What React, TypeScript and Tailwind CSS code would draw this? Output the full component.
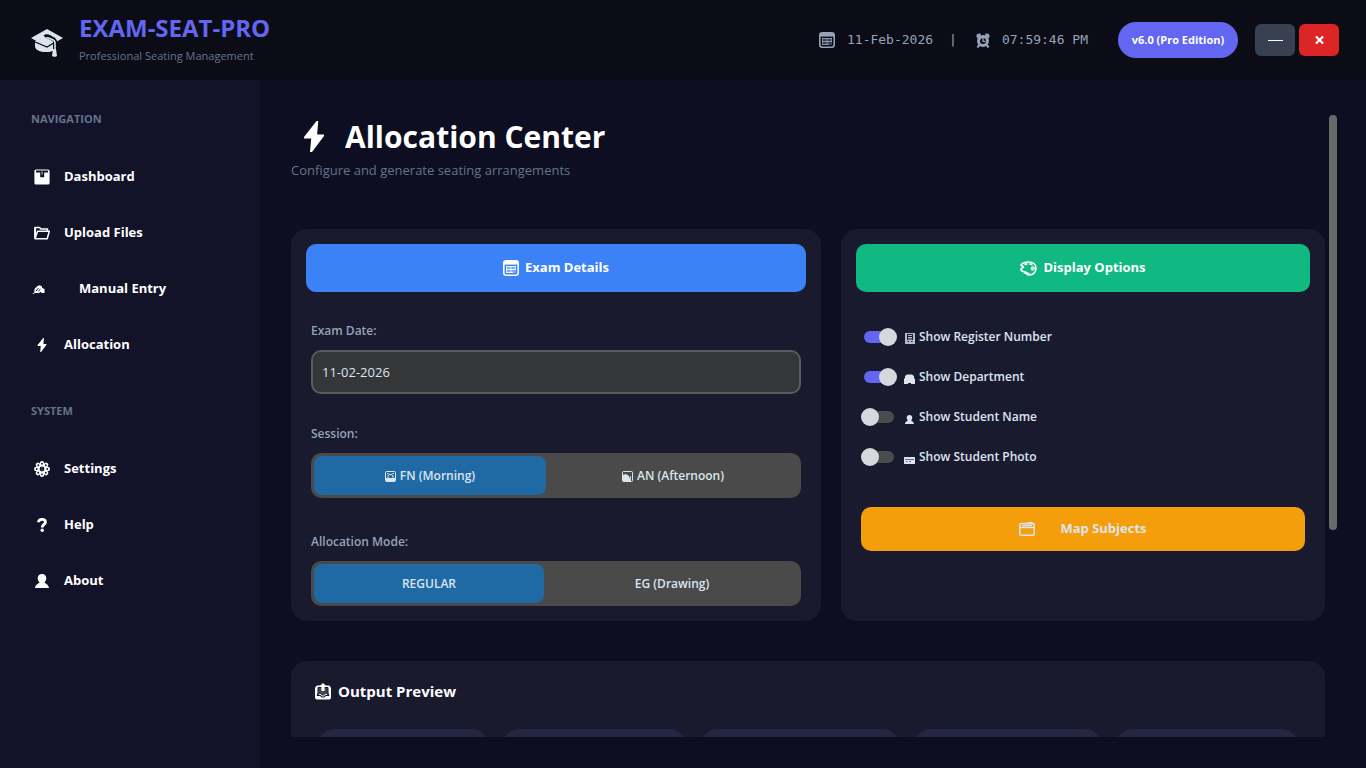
import { useState } from 'react';
import type { ReactNode } from 'react';

type IconProps = { className?: string };

function CapIcon() {
  return (
    <svg width="32" height="28" viewBox="0 0 32 28" fill="none">
      <path d="M4 12v5c0 4 5 6 11 6s11-2 11-5v-6z" fill="#dce4ee" />
      <path d="M16 0L32 9L16 18L0 9z" fill="#dce4ee" />
      <path d="M2 12L16 18L26 12" stroke="#0c0c17" strokeWidth="1.2" />
      <path d="M14 8c2-2 4 0 6 1s4 1 4 4v10" stroke="#0c0c17" strokeWidth="4" />
      <path d="M15 9c1-1 3 0 5 1s4 1 4 4v8" stroke="#dce4ee" strokeWidth="1.6" />
      <path d="M22 20h3l1 7c-1 1-4 1-5 0z" fill="#dce4ee" />
    </svg>
  );
}

function CalendarIcon({ className }: IconProps) {
  return (
    <svg width="16" height="16" viewBox="0 0 16 16" fill="none" className={className}>
      <rect x="0.8" y="0.8" width="14.4" height="14.4" rx="2.5" stroke="currentColor" strokeWidth="1.6" />
      <path d="M1 1h14v3.6H1z" fill="currentColor" />
      <path d="M3 6h10v7H3z" fill="currentColor" fillOpacity="0.35" />
      <path d="M3 6.5h10M3 9.5h10M3 12.5h7" stroke="currentColor" strokeOpacity="0.85" />
      <path d="M3.500 6v7M8 6v7M12.500 6v4" stroke="currentColor" strokeOpacity="0.7" />
    </svg>
  );
}

function ClockIcon() {
  return (
    <svg width="14" height="15" viewBox="0 0 14 15" fill="none">
      <path d="M0.5 4C0 1.500 1.500 0 4.500 0.500L5 2.500 1.800 5.500zM13.500 4C14 1.500 12.500 0 9.500 0.500L9 2.500l3.200 3z" fill="currentColor" />
      <circle cx="7" cy="8" r="4.500" stroke="currentColor" strokeWidth="3" />
      <path d="M7 5V8.300h2.500" stroke="currentColor" strokeWidth="1.300" />
      <path d="M1.500 14.500l2-3M12.500 14.500l-2-3" stroke="currentColor" strokeWidth="2.200" />
    </svg>
  );
}

function DashboardIcon() {
  return (
    <svg width="16" height="16" viewBox="0 0 16 16" fill="none">
      <path d="M2 0.5h12a1.6 1.6 0 0 1 1.6 1.6v11.8a1.6 1.6 0 0 1-1.6 1.6H2A1.6 1.6 0 0 1 0.4 13.9V2.1A1.6 1.6 0 0 1 2 0.5z" fill="#fff" />
      <path d="M2 1.600h12v1.800h-3.800v4.800H6.200V3.400H2z" fill="#121229" />
      <path d="M7.400 2.400h1.400v3.200H7.400z" fill="#9a9aa8" />
    </svg>
  );
}

function FolderIcon() {
  return (
    <svg width="16" height="14" viewBox="0 0 16 14" fill="none" stroke="#fff" strokeWidth="1.500" strokeLinejoin="round">
      <path d="M1 12.500V1.500h4.500L7 3h6.500v2.200" />
      <path d="M1 12.500L3.600 5.200h11.700L13.200 12.800H1z" />
      <path d="M1.200 1.500v10" strokeWidth="1.800" />
    </svg>
  );
}

function WritingIcon() {
  return (
    <svg width="13" height="9" viewBox="0 0 12 9" fill="none">
      <path d="M0 8.500L1.800 7.400 2 4 4.600 1.200l2.400-1L9 1l.8 2 2.200 1v4H9.200L8 6.800 6.400 8H2.600L0.500 9z" fill="#fff" />
      <path d="M3.500 6.200L5.800 3.200M5.800 6.200L8 4" stroke="#121229" />
    </svg>
  );
}

function BoltIcon({ className }: IconProps) {
  return (
    <svg viewBox="0 0 20 31" fill="currentColor" className={className}>
      <path d="M12.500 0h1.800l-1.200 13.500H20v1.600L8 31H6L7.200 17.500H0V16z" />
    </svg>
  );
}

function GearIcon() {
  const angles = [0, 45, 90, 135, 180, 225, 270, 315];
  return (
    <svg width="16" height="16" viewBox="0 0 16 16">
      <circle cx="8" cy="8" r="6" fill="#fff" />
      {angles.map((a) => (
        <circle key={a} cx="8" cy="2.200" r="2.200" fill="#fff" transform={`rotate(${a} 8 8)`} />
      ))}
      {angles.map((a) => (
        <circle key={a} cx="8" cy="2.700" r="0.900" fill="#121229" transform={`rotate(${a} 8 8)`} />
      ))}
      <circle cx="8" cy="8" r="2.400" fill="#121229" />
      <path d="M8 5.500v5" stroke="#fff" strokeWidth="0.600" strokeOpacity="0.500" />
    </svg>
  );
}

function QuestionIcon() {
  return (
    <svg width="10" height="14" viewBox="0 0 10 14" fill="none">
      <path d="M1.500 4.300C1.500 2.400 3 1.400 5 1.400s3.400 1 3.400 2.800C8.400 6.400 5.200 6.600 5.200 9.400" stroke="#fff" strokeWidth="2.900" />
      <circle cx="5.200" cy="12.300" r="1.700" fill="#fff" />
    </svg>
  );
}

function PersonIcon({ className }: IconProps) {
  return (
    <svg viewBox="0 0 14 14" fill="currentColor" className={className}>
      <path d="M7 0c2.800 0 4.300 1.700 4.300 4.200 0 1.800-.8 3-1.800 4 .2 1.300 4.200 1.800 4.500 5.800H0c.3-4 4.300-4.500 4.500-5.800-1-1-1.800-2.200-1.800-4C2.700 1.700 4.200 0 7 0z" />
    </svg>
  );
}

function MorningIcon() {
  return (
    <svg width="11" height="11" viewBox="0 0 11 11" fill="none">
      <rect x="0.500" y="0.500" width="10" height="10" rx="1" stroke="currentColor" />
      <path d="M1 7h9v3.500H1z" fill="currentColor" />
      <path d="M3 7V5l1-1.500h3L8 5v2" stroke="currentColor" />
      <path d="M2 2.500h1.500M7.500 2.500H9" stroke="currentColor" />
    </svg>
  );
}

function AfternoonIcon() {
  return (
    <svg width="11" height="11" viewBox="0 0 11 11" fill="none">
      <rect x="0.500" y="0.500" width="10" height="10" rx="1" stroke="currentColor" />
      <path d="M1 4l3-1 3 2 2 5.500H1z" fill="currentColor" />
      <path d="M8.500 5v5" stroke="currentColor" strokeOpacity="0.800" />
    </svg>
  );
}

function PaletteIcon() {
  return (
    <svg width="17" height="15" viewBox="0 0 17 15" fill="none">
      <path d="M1 4C3 1.500 5.500 1 8.500 1c4.500 0 7.500 2.500 7.500 6.300 0 4-3 6.700-6.800 6.700-3 0-2.200-2.400-3.700-2.900C3.500 10.500 1 10.800 1 8.200c0-1.500 2.400-1 2.400-2.200C3.400 5 1.500 5 1 4z" stroke="#fff" strokeWidth="1.700" />
      <path d="M4.500 3.600l3-1M9.500 2.800l3 .8M4.500 11.800l5 1.200" stroke="#fff" strokeWidth="2" />
      <circle cx="12.800" cy="7.500" r="2.200" fill="#fff" fillOpacity="0.750" />
    </svg>
  );
}

function NumberIcon() {
  return (
    <svg width="10" height="11" viewBox="0 0 10 11" fill="none">
      <path d="M0 0h10v11H0z" fill="currentColor" fillOpacity="0.800" />
      <path d="M2 1h6v6H2z" fill="#1a1a2e" />
      <path d="M3 2.500h4M3 4.500h4M3 6h4" stroke="currentColor" strokeOpacity="0.800" />
      <path d="M2.500 8.500H4M6 8.500h1.500" stroke="#1a1a2e" />
    </svg>
  );
}

function BuildingIcon() {
  return (
    <svg width="11" height="10" viewBox="0 0 11 10" fill="currentColor">
      <path d="M1 2l2-1.500h5L10 2v2l1 1v5H7V9H4v1H0V5l1-1z" />
    </svg>
  );
}

function PhotoIcon() {
  return (
    <svg width="11" height="7" viewBox="0 0 11 7" fill="none">
      <rect width="11" height="7" rx="0.500" fill="currentColor" />
      <path d="M1 2.500h9M2 4.500h1.500M5 4.500h2" stroke="#1a1a2e" strokeOpacity="0.600" />
    </svg>
  );
}

function CardBoxIcon() {
  return (
    <svg width="16" height="14" viewBox="0 0 16 14" fill="none" stroke="currentColor" strokeWidth="1.500">
      <rect x="0.800" y="1.600" width="14.400" height="11.600" rx="1.200" />
      <path d="M1 5.500h14M3 3.500h10M8 1.800l1.500-1H13v1.600" />
    </svg>
  );
}

function OutboxIcon() {
  return (
    <svg width="16" height="17" viewBox="0 0 16 17" fill="none">
      <path d="M2 2.500h12l2 2V14.500a2 2 0 0 1-2 2H2a2 2 0 0 1-2-2V4.500z" fill="#fff" />
      <path d="M3 4.500h10v5.500l1 2.500h-3.500L9.500 14h-3L5.500 12.500H2L3 10z" stroke="#1a1a2e" fill="#454556" />
      <path d="M8 0l4.200 4H9.600v4H6.400V4H3.800z" fill="#fff" />
      <path d="M4 11.500h2l1 1.500h2l1-1.500h2" stroke="#fff" strokeWidth="0.800" />
    </svg>
  );
}

type NavItem = { label: string; icon: ReactNode; wide?: boolean };

const mainNav: NavItem[] = [
  { label: 'Dashboard', icon: <DashboardIcon /> },
  { label: 'Upload Files', icon: <FolderIcon /> },
  { label: 'Manual Entry', icon: <WritingIcon />, wide: true },
  { label: 'Allocation', icon: <BoltIcon className="h-3.5 w-2.5" /> },
];

const systemNav: NavItem[] = [
  { label: 'Settings', icon: <GearIcon /> },
  { label: 'Help', icon: <QuestionIcon /> },
  { label: 'About', icon: <PersonIcon className="size-3.5" /> },
];

function NavGroup({ title, items }: { title: string; items: NavItem[] }) {
  return (
    <div>
      <h2 className="text-[11px] leading-4 font-bold text-[#64748b]">{title}</h2>
      <div className="mt-[22px]">
        {items.map((item) => (
          <button
            key={item.label}
            className={`flex h-14 w-full items-center text-left text-[13px] font-bold text-white ${item.wide ? 'gap-[34px]' : 'gap-3.5'}`}
          >
            <span className={`flex shrink-0 justify-center ${item.wide ? 'w-3.5' : 'ml-[3px] w-4'}`}>{item.icon}</span>
            {item.label}
          </button>
        ))}
      </div>
    </div>
  );
}

type Option = { value: string; label: string; icon?: ReactNode };

function Segmented({ name, options, columns }: { name: string; options: Option[]; columns: string }) {
  const [value, setValue] = useState(options[0].value);
  return (
    <div className={`grid h-[45px] rounded-[10px] bg-[#4a4a4a] py-[3px] pr-px pl-[3px] ${columns}`}>
      {options.map((o) => (
        <label
          key={o.value}
          className="relative flex items-center justify-center gap-1 rounded-lg text-xs font-semibold text-[#dce4ee] has-checked:bg-[#1f6aa5]"
        >
          <input
            type="radio"
            name={name}
            className="sr-only"
            checked={value === o.value}
            onChange={() => setValue(o.value)}
          />
          {o.icon && <span className="pt-0.5">{o.icon}</span>}
          {o.label}
        </label>
      ))}
    </div>
  );
}

function Toggle({ label, icon, on }: { label: string; icon: ReactNode; on?: boolean }) {
  return (
    <label className="flex h-10 items-center text-xs font-semibold text-[#dce4ee]">
      <span className="relative flex h-[18px] w-9 items-center">
        <input type="checkbox" defaultChecked={on} className="peer sr-only" />
        <span className="mx-[3px] h-3 w-[30px] rounded-full bg-[#4a4d50] peer-checked:bg-[#6366f1]" />
        <span className="absolute left-0 size-[18px] rounded-full bg-[#d5d9de] peer-checked:left-[18px]" />
      </span>
      <span className="mr-1 ml-[7px] flex h-3.5 w-[11px] items-end justify-center">{icon}</span>
      {label}
    </label>
  );
}

export default function App() {
  return (
    <div className="flex h-screen flex-col overflow-hidden bg-[#0d0e21] font-['Open_Sans','Noto_Sans',sans-serif]">
      <header className="flex h-20 shrink-0 items-center justify-between bg-[#0c0c17] pr-[27px] pl-[31px]">
        <div className="flex items-center gap-4">
          <span className="pt-1.5">
            <CapIcon />
          </span>
          <div className="pb-1">
            <h1 className="text-2xl leading-8 font-bold text-[#6366f1]">EXAM-SEAT-PRO</h1>
            <p className="mt-1 text-[11px] leading-4 text-[#64748b]">Professional Seating Management</p>
          </div>
        </div>
        <div className="flex items-center">
          <div className="flex items-center font-['DejaVu_Sans_Mono',monospace] text-[13px] text-[#94a3b8]">
            <CalendarIcon className="mr-3" />
            <span>11-Feb-2026</span>
            <span className="mr-[19px] ml-4">|</span>
            <ClockIcon />
            <span className="ml-3">07:59:46 PM</span>
          </div>
          <span className="ml-[30px] flex h-9 w-[120px] items-center justify-center rounded-full bg-[#6366f1] text-[11px] font-bold text-white">
            v6.0 (Pro Edition)
          </span>
          <button aria-label="Minimize" className="ml-[17px] flex h-8 w-10 items-center justify-center rounded-md bg-[#374151]">
            <span className="h-px w-[15px] bg-white" />
          </button>
          <button aria-label="Close" className="ml-1 flex h-8 w-10 items-center justify-center rounded-md bg-[#dc2626]">
            <svg width="9" height="8" viewBox="0 0 10 9" stroke="#fff" strokeWidth="2.400">
              <path d="M1 0.500l8 8M9 0.500l-8 8" />
            </svg>
          </button>
        </div>
      </header>

      <div className="flex min-h-0 flex-1">
        <nav className="flex w-[260px] shrink-0 flex-col gap-[30px] bg-[#121229] px-[31px] pt-[31px]">
          <NavGroup title="NAVIGATION" items={mainNav} />
          <NavGroup title="SYSTEM" items={systemNav} />
        </nav>

        <main className="flex min-w-0 flex-1 gap-1 pt-[35px] pr-[29px] pb-[31px] pl-[31px]">
          <div className="min-w-0 flex-1 overflow-hidden">
            <h1 className="flex h-[42px] items-center gap-[21px] pl-[13px] text-[30px] font-bold text-white">
              <BoltIcon className="h-[31px] w-5" />
              Allocation Center
            </h1>
            <p className="mt-[3px] text-[13px] leading-5 text-[#64748b]">Configure and generate seating arrangements</p>

            <div className="mt-[49px] grid grid-cols-[530fr_484fr] gap-5">
              <section className="rounded-2xl bg-[#1a1a2e] p-[15px]">
                <h2 className="flex h-12 items-center justify-center gap-1.5 rounded-[10px] bg-[#3b82f6] text-[13px] font-bold text-white">
                  <CalendarIcon />
                  Exam Details
                </h2>
                <div className="px-[5px] text-xs font-semibold text-[#94a3b8]">
                  <label htmlFor="exam-date" className="mt-[31px] mb-[11px] block">
                    Exam Date:
                  </label>
                  <input
                    id="exam-date"
                    defaultValue="11-02-2026"
                    className="h-11 w-full rounded-[10px] border-2 border-[#565b5e] bg-[#343638] px-[9px] text-[13px] font-normal text-[#dce4ee] outline-none"
                  />
                  <p className="mt-8 mb-[11px]">Session:</p>
                  <Segmented
                    name="session"
                    columns="grid-cols-[232fr_254fr]"
                    options={[
                      { value: 'fn', label: 'FN (Morning)', icon: <MorningIcon /> },
                      { value: 'an', label: 'AN (Afternoon)', icon: <AfternoonIcon /> },
                    ]}
                  />
                  <p className="mt-9 mb-[11px]">Allocation Mode:</p>
                  <Segmented
                    name="mode"
                    columns="grid-cols-[230fr_256fr]"
                    options={[
                      { value: 'regular', label: 'REGULAR' },
                      { value: 'eg', label: 'EG (Drawing)' },
                    ]}
                  />
                </div>
              </section>

              <section className="rounded-2xl bg-[#1a1a2e] p-[15px]">
                <h2 className="flex h-12 items-center justify-center gap-1.5 rounded-[10px] bg-[#10b981] text-[13px] font-bold text-white">
                  <PaletteIcon />
                  Display Options
                </h2>
                <div className="mt-[25px] px-[5px]">
                  <Toggle label="Show Register Number" icon={<NumberIcon />} on />
                  <Toggle label="Show Department" icon={<BuildingIcon />} on />
                  <Toggle label="Show Student Name" icon={<PersonIcon className="size-[9px]" />} />
                  <Toggle label="Show Student Photo" icon={<PhotoIcon />} />
                  <button className="mt-[30px] flex h-11 w-full items-center justify-center gap-[25px] rounded-[10px] bg-[#f59e0b] text-[13px] font-bold text-[#dce4ee]">
                    <CardBoxIcon />
                    Map Subjects
                  </button>
                </div>
              </section>
            </div>

            <section className="mt-10 rounded-2xl bg-[#1a1a2e] pt-[15px]">
              <h2 className="flex h-[30px] items-center gap-[7px] pl-6 text-[15px] font-bold text-white">
                <OutboxIcon />
                Output Preview
              </h2>
              <div className="mt-[23px] grid grid-cols-[170fr_184fr_198fr_188fr_182fr] gap-[15px] px-[27px] pb-6">
                {[0, 1, 2, 3, 4].map((i) => (
                  <div key={i} className="h-24 rounded-2xl bg-[#252544]" />
                ))}
              </div>
            </section>
          </div>

          <div className="w-2 shrink-0">
            <div className="h-2/3 rounded-sm bg-[#696969]" />
          </div>
        </main>
      </div>
    </div>
  );
}
